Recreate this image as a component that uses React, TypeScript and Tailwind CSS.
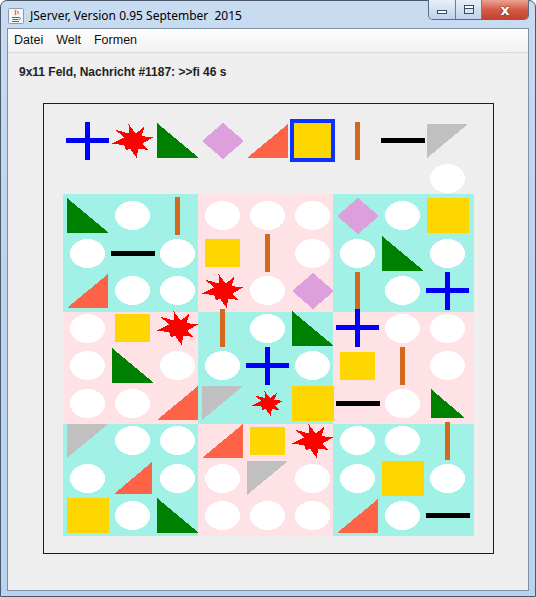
import type { ReactElement } from "react";

// 11 rows x 9 cols; row 0 = Formen-Leiste, row 1 = Vorschau, rows 2..10 = Feld
const FIELD: string[][] = [
  ["+", "X", "G", "D", "T", "Q*", "|", "-", "S"],
  ["", "", "", "", "", "", "", "", "o"],
  ["G", "o", "|", "o", "o", "o", "D", "o", "Q"],
  ["o", "-", "o", "q", "|", "o", "o", "G", "o"],
  ["T", "o", "o", "X", "o", "D", "|", "o", "+"],
  ["o", "q", "X", "|", "o", "G", "+", "o", "o"],
  ["o", "G", "o", "o", "+", "o", "q", "|", "o"],
  ["o", "o", "T", "S", "x", "Q", "-", "o", "g"],
  ["S", "o", "o", "T", "q", "X", "o", "o", "|"],
  ["o", "t", "o", "o", "S", "o", "o", "Q", "o"],
  ["Q", "o", "G", "o", "o", "o", "T", "o", "-"],
];

const BLOCKS = ["cyan", "pink", "cyan", "pink", "cyan", "pink", "cyan", "pink", "cyan"];

// star tips + inner points, in a 100x100 box
const STAR =
  "40,0 58,28 80,7 72,36 100,39 74,58 90,77 64,72 60,100 44,72 34,77 30,62 0,58 30,40 8,17 42,28";

function Svg({ w, h, children }: { w: number; h: number; children: React.ReactNode }) {
  return (
    <svg width={w} height={h} viewBox={`0 0 ${w} ${h}`} shapeRendering="crispEdges" className="block">
      {children}
    </svg>
  );
}

function Star({ w, h }: { w: number; h: number }) {
  return (
    <svg width={w} height={h} viewBox="0 0 100 100" preserveAspectRatio="none" shapeRendering="crispEdges" className="block">
      <polygon points={STAR} fill="#ff0000" />
    </svg>
  );
}

function Shape({ code }: { code: string }): ReactElement | null {
  switch (code) {
    case "o":
      return (
        <Svg w={35} h={29}>
          <ellipse cx={17.5} cy={14.5} rx={17.5} ry={14.5} fill="#ffffff" />
        </Svg>
      );
    case "Q":
      return <div className="w-[42px] h-[35px] bg-[#ffd700]" />;
    case "q":
      return <div className="w-[35px] h-[28px] bg-[#ffd700]" />;
    case "Q*":
      return <div className="w-[50px] h-[43px] border-[4px] border-[#0b32ff] bg-[#ffd700]" />;
    case "G":
      return (
        <Svg w={42} h={35}>
          <polygon points="0,0 0,35 42,35" fill="#008000" />
        </Svg>
      );
    case "g":
      return (
        <Svg w={34} h={29}>
          <polygon points="0,0 0,29 34,29" fill="#008000" />
        </Svg>
      );
    case "T":
      return (
        <Svg w={41} h={34}>
          <polygon points="41,0 41,34 0,34" fill="#ff6347" />
        </Svg>
      );
    case "t":
      return (
        <Svg w={38} h={32}>
          <polygon points="38,0 38,32 0,32" fill="#ff6347" />
        </Svg>
      );
    case "S":
      return (
        <Svg w={41} h={34}>
          <polygon points="0,0 41,0 0,34" fill="#c0c0c0" />
        </Svg>
      );
    case "D":
      return (
        <Svg w={42} h={36}>
          <polygon points="21,0 42,18 21,36 0,18" fill="#dda0dd" />
        </Svg>
      );
    case "X":
      return <Star w={41} h={34} />;
    case "x":
      return <Star w={31} h={25} />;
    case "+":
      return (
        <Svg w={43} h={38}>
          <rect x={19} y={0} width={5} height={38} fill="#0000ff" />
          <rect x={0} y={16} width={43} height={5} fill="#0000ff" />
        </Svg>
      );
    case "|":
      return <div className="w-[5px] h-[38px] bg-[#d2691e]" />;
    case "-":
      return <div className="w-[44px] h-[5px] bg-black" />;
    default:
      return null;
  }
}

function JavaIcon() {
  return (
    <svg width={16} height={16} viewBox="0 0 16 16" className="block">
      <rect x={0.5} y={0.5} width={15} height={15} rx={1} fill="#f3f5f8" stroke="#8c9bb0" />
      <path d="M8 2c-2 2 1 3 -1 5M10 3c-1 1 1 2 0 3" stroke="#e8741c" strokeWidth={1.3} fill="none" />
      <path d="M4 9.5h7M4.5 11.5h6M4 13.5h7" stroke="#3a68b8" strokeWidth={1} />
      <path d="M11 9.5c2 0 2 2 0 2" stroke="#3a68b8" strokeWidth={1} fill="none" />
    </svg>
  );
}

export default function App() {
  return (
    <div className="w-[536px] h-[597px] bg-white overflow-hidden">
      <div className="h-full flex flex-col rounded-t-[7px] border border-[#4b596b] bg-gradient-to-b from-[#c8dcf1] via-[#bcd3ec] to-[#b9d3ee] px-[6px] pb-[5px]">
        {/* Title bar */}
        <div className="h-[27px] flex items-start shrink-0">
          <div className="flex items-center gap-[6px] pt-[7px] pl-[1px]">
            <JavaIcon />
            <span className="whitespace-pre text-[12px] leading-[16px] text-black font-['Noto_Sans',sans-serif]">
              JServer, Version 0.95 September  2015
            </span>
          </div>
          <div className="ml-auto flex h-[20px] -mt-px overflow-hidden rounded-b-[5px] border border-t-0 border-[#5a6a80]">
            <div className="w-[27px] flex items-end justify-center pb-[5px] border-r border-[#6d7f97] bg-gradient-to-b from-[#e9f0f8] via-[#d3e1f1] to-[#bdd1ea]">
              <div className="w-[10px] h-[4px] bg-white border border-[#3b4a5e]" />
            </div>
            <div className="w-[26px] flex items-center justify-center border-r border-[#6d7f97] bg-gradient-to-b from-[#e9f0f8] via-[#d3e1f1] to-[#bdd1ea]">
              <div className="w-[10px] h-[9px] border border-[#3b4a5e] bg-[#dde7f3]">
                <div className="h-[3px] border-b border-[#3b4a5e] bg-white" />
              </div>
            </div>
            <div className="w-[46px] flex items-center justify-center bg-gradient-to-b from-[#e9a393] via-[#d45c47] to-[#c4412d]">
              <span className="text-[14px] leading-none font-bold text-white font-['DejaVu_Sans',sans-serif] [text-shadow:0_0_2px_#5a1a10]">
                x
              </span>
            </div>
          </div>
        </div>

        {/* Client area */}
        <div className="flex-1 flex flex-col border border-[#7f8fa4] bg-[#eeeeee]">
          {/* Menu bar */}
          <div className="h-[24px] flex items-center gap-[1px] border-b border-[#d9d9d9] bg-gradient-to-b from-white to-[#f1f1f1] text-[12.5px] text-[#111] font-['Liberation_Sans',Arial,sans-serif]">
            <span className="px-[6px]">Datei</span>
            <span className="px-[6px]">Welt</span>
            <span className="px-[6px]">Formen</span>
          </div>

          <div className="pl-[11px] mt-[12px] text-[12px] leading-[14px] font-bold text-[#222] font-['Liberation_Sans',Arial,sans-serif]">
            9x11 Feld, Nachricht #1187: &gt;&gt;fi 46 s
          </div>

          {/* Spielfeld: blauer Rahmen */}
          <div className="ml-[35px] mt-[24px] w-[451px] h-[451px] bg-[#0000ff] p-[1px]">
            <div className="relative h-full bg-[#eeeeee] pl-[21px] pt-[18px]">
              <div className="absolute left-[19px] top-[90px] grid grid-cols-[135px_135px_141px] grid-rows-[118px_112px_112px]">
                {BLOCKS.map((b, i) => (
                  <div key={i} className={b === "cyan" ? "bg-[#a2f1e6]" : "bg-[#ffe2e6]"} />
                ))}
              </div>
              <div className="relative grid grid-cols-[repeat(9,45px)] grid-rows-[repeat(11,37.5px)]">
                {FIELD.flatMap((row, r) =>
                  row.map((code, c) => (
                    <div key={`${r}-${c}`} className="flex items-center justify-center">
                      <Shape code={code} />
                    </div>
                  ))
                )}
              </div>
            </div>
          </div>
        </div>
      </div>
    </div>
  );
}
